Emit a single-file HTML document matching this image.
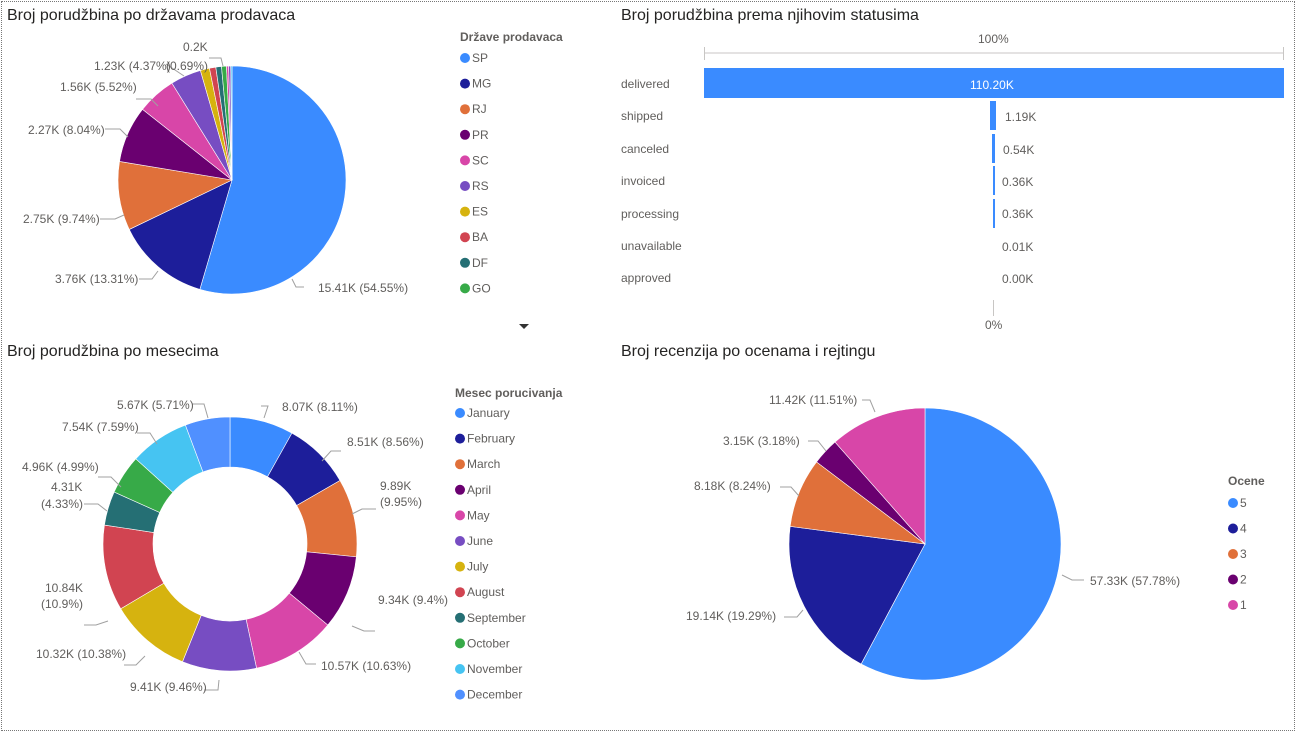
<!DOCTYPE html>
<html><head><meta charset="utf-8"><style>
html,body{margin:0;padding:0;background:#fff;}
body{width:1296px;height:732px;overflow:hidden;position:relative;font-family:"Liberation Sans",sans-serif;}
svg text{font-family:"Liberation Sans",sans-serif;}
.frame{position:absolute;left:1px;top:1px;width:1292px;height:728px;border:1px dotted #777;}
</style></head><body>
<div class="frame"></div>
<svg id="s" width="1296" height="732" style="position:absolute;left:0;top:0">
<g font-size="16" fill="#252423">
<text x="7" y="20">Broj porudžbina po državama prodavaca</text>
<text x="621" y="20">Broj porudžbina prema njihovim statusima</text>
<text x="7" y="356">Broj porudžbina po mesecima</text>
<text x="621" y="356">Broj recenzija po ocenama i rejtingu</text>
</g>
<g id="pies"></g>
<g stroke="#a0a0a0" fill="none" stroke-width="1">
<path d="M209 58 H221 L223 66"/>
<path d="M166 64 L184 76"/>
<path d="M136 99 H151 L158 106"/>
<path d="M105 129 H120 L128 137"/>
<path d="M100 219 H115 L124 215"/>
<path d="M139 279 H152 L158 271"/>
<path d="M304 287 H296 L292 279"/>
<path d="M192 404 H204 L208 418"/>
<path d="M261 406 H268 L264 418"/>
<path d="M137 433 H150 L157 444"/>
<path d="M341 451 H331 L322 461"/>
<path d="M98 477 H111 L121 487"/>
<path d="M84 504 H98 L107 511"/>
<path d="M376 509 H362 L352 514"/>
<path d="M84 625 H96 L108 621"/>
<path d="M375 631 H364 L352 626"/>
<path d="M124 665 H136 L145 656"/>
<path d="M316 664 H306 L299 652"/>
<path d="M204 690 H218 L219 680"/>
<path d="M862 400 H870 L875 412"/>
<path d="M808 441 H818 L826 451"/>
<path d="M780 487 H791 L799 496"/>
<path d="M1084 580 H1072 L1062 575"/>
<path d="M784 617 H797 L803 610"/>
</g>
<g font-size="12" fill="#605e5c" id="labels">
<text x="183" y="51">0.2K</text>
<text x="166" y="70">(0.69%)</text>
<text x="94" y="70">1.23K (4.37%)</text>
<text x="60" y="91">1.56K (5.52%)</text>
<text x="28" y="134">2.27K (8.04%)</text>
<text x="23" y="223">2.75K (9.74%)</text>
<text x="55" y="283">3.76K (13.31%)</text>
<text x="318" y="292">15.41K (54.55%)</text>
<text x="117" y="409">5.67K (5.71%)</text>
<text x="282" y="411">8.07K (8.11%)</text>
<text x="62" y="431">7.54K (7.59%)</text>
<text x="347" y="446">8.51K (8.56%)</text>
<text x="22" y="471">4.96K (4.99%)</text>
<text x="51" y="491">4.31K</text>
<text x="41" y="508">(4.33%)</text>
<text x="380" y="490">9.89K</text>
<text x="380" y="506">(9.95%)</text>
<text x="45" y="592">10.84K</text>
<text x="41" y="608">(10.9%)</text>
<text x="378" y="604">9.34K (9.4%)</text>
<text x="36" y="658">10.32K (10.38%)</text>
<text x="321" y="670">10.57K (10.63%)</text>
<text x="130" y="691">9.41K (9.46%)</text>
<text x="769" y="404">11.42K (11.51%)</text>
<text x="723" y="445">3.15K (3.18%)</text>
<text x="694" y="490">8.18K (8.24%)</text>
<text x="1090" y="585">57.33K (57.78%)</text>
<text x="686" y="620">19.14K (19.29%)</text>
</g>
<g id="legends" font-size="12" fill="#605e5c"></g>
<g font-size="12" font-weight="bold" fill="#605e5c">
<text x="460" y="41">Države prodavaca</text>
<text x="455" y="397">Mesec porucivanja</text>
<text x="1228" y="485">Ocene</text>
</g>
<path d="M519 324 l10 0 l-5 5 z" fill="#333"/>
<g stroke="#c8c6c4" fill="none">
<path d="M704 53 H1284 M704.5 47 V60 M1283.5 47 V60 M993.5 300 V316"/>
</g>
<g font-size="12" fill="#605e5c">
<text x="978" y="43">100%</text>
<text x="985" y="329">0%</text>
<text x="621" y="88">delivered</text>
<text x="621" y="120">shipped</text>
<text x="621" y="153">canceled</text>
<text x="621" y="185">invoiced</text>
<text x="621" y="218">processing</text>
<text x="621" y="250">unavailable</text>
<text x="621" y="282">approved</text>
<text x="1005" y="121">1.19K</text>
<text x="1003" y="154">0.54K</text>
<text x="1002" y="186">0.36K</text>
<text x="1002" y="218">0.36K</text>
<text x="1002" y="251">0.01K</text>
<text x="1002" y="283">0.00K</text>
</g>
<rect x="704" y="68" width="580" height="30" fill="#3a8bff"/>
<text x="970" y="89" font-size="12" fill="#fff">110.20K</text>
<rect x="990" y="101" width="6" height="29" fill="#3a8bff"/>
<rect x="992" y="134" width="3" height="29" fill="#3a8bff"/>
<rect x="993" y="166" width="2" height="29" fill="#3a8bff"/>
<rect x="993" y="199" width="2" height="29" fill="#3a8bff"/>
</svg>
<script>
var NS="http://www.w3.org/2000/svg",g=document.getElementById("pies"),L=document.getElementById("legends");
function pie(cx,cy,r,ri,vals,cols){var t=vals.reduce((a,b)=>a+b,0),a=-Math.PI/2;
vals.forEach(function(v,i){var b=a+v/t*2*Math.PI,lg=(b-a)>Math.PI?1:0;
var p="M"+(cx+r*Math.cos(a))+" "+(cy+r*Math.sin(a))+"A"+r+" "+r+" 0 "+lg+" 1 "+(cx+r*Math.cos(b))+" "+(cy+r*Math.sin(b));
if(ri)p+="L"+(cx+ri*Math.cos(b))+" "+(cy+ri*Math.sin(b))+"A"+ri+" "+ri+" 0 "+lg+" 0 "+(cx+ri*Math.cos(a))+" "+(cy+ri*Math.sin(a))+"Z";
else p+="L"+cx+" "+cy+"Z";
var e=document.createElementNS(NS,"path");e.setAttribute("d",p);e.setAttribute("fill",cols[i]);e.setAttribute("stroke","#fff");e.setAttribute("stroke-width","0.6");g.appendChild(e);a=b;});}
function leg(x,y,dy,names,cols){names.forEach(function(n,i){var c=document.createElementNS(NS,"circle");c.setAttribute("cx",x+5);c.setAttribute("cy",y+dy*i-4);c.setAttribute("r",5);c.setAttribute("fill",cols[i]);L.appendChild(c);
var t=document.createElementNS(NS,"text");t.setAttribute("x",x+12);t.setAttribute("y",y+dy*i);t.textContent=n;L.appendChild(t);});}
var C=["#3a8bff","#1d1e9a","#e0703a","#6a0070","#d846a8","#774dc2","#d6b30f","#d14451","#256f74","#37aa48","#46c4f2","#5090ff"];
pie(232,180,114,0,[54.55,13.31,9.74,8.04,5.52,4.37,1.3,0.9,0.8,0.69,0.3,0.3,0.18],C.slice(0,10).concat(["#d846a8","#774dc2","#46c4f2"]));
leg(460,62,25.6,["SP","MG","RJ","PR","SC","RS","ES","BA","DF","GO"],C);
pie(230,544,127,77,[8.11,8.56,9.95,9.4,10.63,9.46,10.38,10.9,4.33,4.99,7.59,5.71],C);
leg(455,417,25.6,["January","February","March","April","May","June","July","August","September","October","November","December"],C);
pie(925,544,136,0,[57.78,19.29,8.24,3.18,11.51],["#3a8bff","#1d1e9a","#e0703a","#6a0070","#d846a8"]);
leg(1228,507,25.5,["5","4","3","2","1"],["#3a8bff","#1d1e9a","#e0703a","#6a0070","#d846a8"]);
</script>
</body></html>
